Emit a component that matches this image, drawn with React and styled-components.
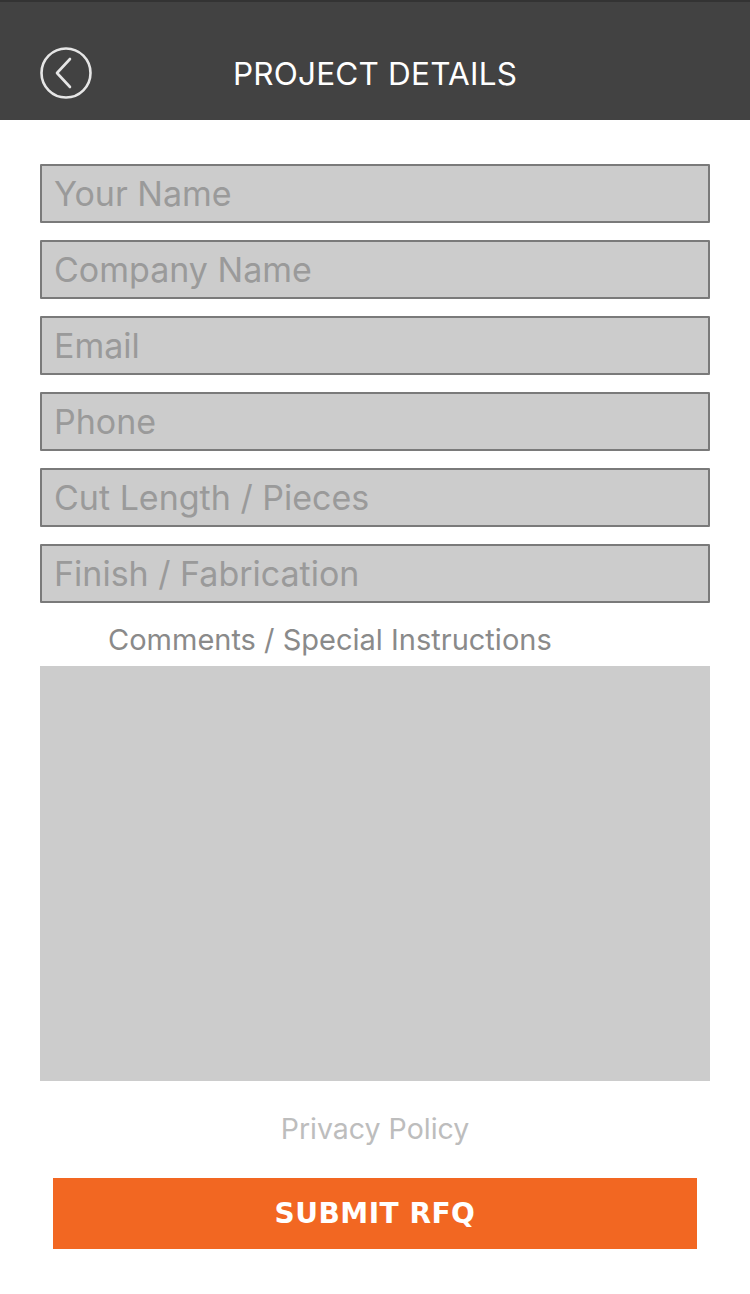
import React from "react";
import styled, { createGlobalStyle } from "styled-components";

const GlobalStyle = createGlobalStyle`
  html, body {
    margin: 0;
    padding: 0;
    background: #ffffff;
    font-family: Inter, "Liberation Sans", sans-serif;
  }
`;

const Page = styled.div`
  width: 750px;
  min-height: 1294px;
  background: #ffffff;
`;

const Header = styled.header`
  height: 120px;
  padding-top: 24px;
  background: #424242;
  border-top: 2px solid #333;
  box-sizing: border-box;
  display: grid;
  grid-template-columns: 132px 1fr 132px;
  align-items: center;
`;

const BackButton = styled.button`
  width: 54px;
  height: 54px;
  margin-left: 39px;
  padding: 0;
  border: none;
  background: transparent;
  display: flex;
  align-items: center;
  justify-content: center;
  cursor: pointer;
`;

const Title = styled.h1`
  margin: 0;
  text-align: center;
  color: #ffffff;
  font-size: 31.5px;
  font-weight: 400;
  letter-spacing: 0.2px;
`;

const Form = styled.form`
  display: flex;
  flex-direction: column;
  padding: 44px 40px 0;
`;

const Fields = styled.div`
  display: flex;
  flex-direction: column;
  gap: 17px;
`;

const Field = styled.input`
  box-sizing: border-box;
  width: 100%;
  height: 59px;
  margin: 0;
  padding: 0 12px;
  background: #cccccc;
  border: 2px solid #7a7a7a;
  border-radius: 1px;
  font-family: inherit;
  font-size: 34px;
  color: #555;
  outline: none;

  &::placeholder {
    color: #9a9a9a;
  }
`;

const Label = styled.label`
  display: block;
  margin: 20px 0 9px 68px;
  font-size: 29px;
  color: #8a8a8a;
  line-height: 34px;
`;

const Comments = styled.textarea`
  box-sizing: border-box;
  width: 100%;
  height: 415px;
  margin: 0;
  border: none;
  background: #cccccc;
  resize: none;
  font-family: inherit;
  font-size: 26px;
  padding: 12px;
  outline: none;
`;

const Privacy = styled.a`
  align-self: center;
  margin-top: 32px;
  font-size: 28.5px;
  line-height: 32px;
  color: #bdbdbd;
  text-decoration: none;
`;

const Submit = styled.button`
  margin: 33px 13px 0;
  height: 71px;
  border: none;
  background: #f26722;
  color: #ffffff;
  font-family: "DejaVu Sans", sans-serif;
  font-weight: 700;
  font-size: 28px;
  letter-spacing: 0.5px;
  cursor: pointer;
`;

const BackIcon = () => (
  <svg width="54" height="54" viewBox="0 0 54 54" fill="none">
    <circle cx="27" cy="27" r="24.5" stroke="#e6e6e6" strokeWidth="2.6" />
    <path d="M31 13 L18 27 L31 41" stroke="#e6e6e6" strokeWidth="2.6" strokeLinecap="round" strokeLinejoin="round" />
  </svg>
);

const fields = [
  "Your Name",
  "Company Name",
  "Email",
  "Phone",
  "Cut Length / Pieces",
  "Finish / Fabrication",
];

export default function App() {
  return (
    <Page>
      <GlobalStyle />
      <Header>
        <BackButton aria-label="Back">
          <BackIcon />
        </BackButton>
        <Title>PROJECT DETAILS</Title>
        <span />
      </Header>
      <Form onSubmit={(e) => e.preventDefault()}>
        <Fields>
          {fields.map((f) => (
            <Field key={f} placeholder={f} />
          ))}
        </Fields>
        <Label htmlFor="comments">Comments / Special Instructions</Label>
        <Comments id="comments" />
        <Privacy href="#">Privacy Policy</Privacy>
        <Submit type="submit">SUBMIT RFQ</Submit>
      </Form>
    </Page>
  );
}
